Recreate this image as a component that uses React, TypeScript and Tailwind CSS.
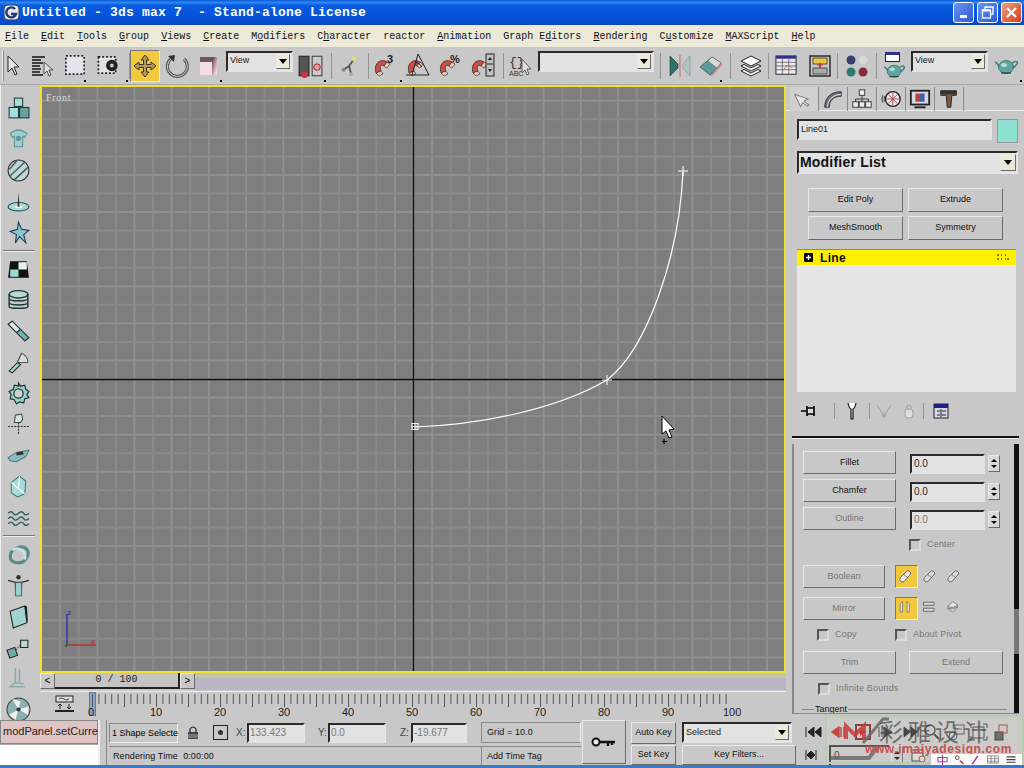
import React from "react";

const raised = "border border-t-[#e8e8e8] border-l-[#e8e8e8] border-r-[#6a6a6a] border-b-[#6a6a6a]";
const sunken = "border-2 border-t-[#2a2a2a] border-l-[#2a2a2a] border-r-[#e4e4e4] border-b-[#e4e4e4] bg-[#e2e2e2]";

function Svg({ children, w = 24, h = 24, vb = "0 0 24 24" }: { children: React.ReactNode; w?: number; h?: number; vb?: string }) {
  return <svg width={w} height={h} viewBox={vb} className="block shrink-0">{children}</svg>;
}

const Flyout = () => <div className="absolute right-[1px] bottom-[2px] w-[2px] h-[2px] bg-black" />;

function Slot({ cls, children, fly }: { cls: string; children?: React.ReactNode; fly?: boolean }) {
  return <div className={`relative h-full flex items-center justify-center shrink-0 ${cls}`}>{children}{fly && <Flyout />}</div>;
}

const Sep = ({ cls = "" }: { cls?: string }) => <div className={`w-[1px] h-[26px] bg-[#949494] shrink-0 ${cls}`} />;

function Combo({ cls, text }: { cls: string; text?: string }) {
  return (
    <div className={`relative h-[21px] flex items-center shrink-0 ${sunken} ${cls}`}>
      <span className="text-[9px] pl-[2px] text-[#222]">{text}</span>
      <div className={`absolute right-[1px] top-[1px] w-[14px] h-[15px] bg-[#ece9d8] ${raised} flex items-center justify-center`}>
        <svg width="8" height="5" viewBox="0 0 8 5"><path d="M0 0h8L4 5z" fill="#000" /></svg>
      </div>
    </div>
  );
}

const Magnet = ({ extra }: { extra?: React.ReactNode }) => (
  <Svg w={28} h={26} vb="0 0 28 26">
    <path d="M4 20 C1 10 9 5 15 9 L12 13 C9 11 7 14 9 18z" fill="#c8504a" stroke="#3a1a1a" strokeWidth=".7" />
    <path d="M4 20l5-2 2 3-4 2z M12 13l3-4 3 2-3 4z" fill="#e6cdb8" stroke="#3a1a1a" strokeWidth=".6" />
    {extra}
  </Svg>
);

const Teapot = ({ w = 22 }: { w?: number }) => (
  <Svg w={w} h={w * 0.75} vb="0 0 24 18">
    <path d="M1 5 C4 6 4 9 6 10 M18 6 C22 3 24 5 23 7 C22 9 19 11 17 12" fill="none" stroke="#3f7f7a" strokeWidth="1.6" />
    <ellipse cx="12" cy="10" rx="7.5" ry="6.5" fill="#5fa5a0" stroke="#23504d" strokeWidth=".6" />
    <ellipse cx="10" cy="8" rx="3" ry="2" fill="#b7dedb" />
    <path d="M7 16h10" stroke="#1d3d3a" strokeWidth="1.2" />
  </Svg>
);

function TopToolbar() {
  return (
    <div className="h-[38px] flex items-center bg-[#c8c8c8] border-b border-[#a8a8a8] shrink-0">
      <Slot cls="w-[5px]"><div className="w-[2px] h-[30px] bg-[#eeeeee] border-r border-[#8a8a8a]" /></Slot>
      <Slot cls="w-[16px]"><Svg w={14} h={24} vb="0 0 14 24"><path d="M2 2v16l4-4 3 7 2-1-3-7h5z" fill="#e6e6e6" stroke="#222" strokeWidth="1" /></Svg></Slot>
      <Slot cls="w-[42px]"><Svg w={24} h={24}><path d="M2 3h13M2 6h9M2 9h11M2 12h8M2 15h9M2 18h8M2 21h11" stroke="#111" strokeWidth="1.5" /><path d="M14 8v12l3-3 2 5 2-1-2-5h4z" fill="#ddd" stroke="#333" strokeWidth=".8" /></Svg></Slot>
      <Slot cls="w-[24px]" fly><Svg w={23} h={23}><rect x="2" y="2" width="19" height="19" fill="#e4e4ee" stroke="#222" strokeWidth="1.8" strokeDasharray="2 2" /></Svg></Slot>
      <Slot cls="w-[42px]" fly><Svg w={24} h={23}><rect x="2" y="3" width="18" height="17" fill="#e4e4e4" stroke="#222" strokeWidth="1.8" strokeDasharray="2 2" /><circle cx="16" cy="12" r="6" fill="#222" /><circle cx="16" cy="12" r="2" fill="#ccc" /></Svg></Slot>
      <Sep />
      <Slot cls="w-[30px]">
        <div className="w-[30px] h-[32px] bg-[#f2c83c] border border-t-[#777] border-l-[#777] border-r-[#eee] border-b-[#eee] flex items-center justify-center">
          <Svg w={24} h={24}><path d="M12 1l4 5h-2.500v4.500H18V8l5 4-5 4v-2.500h-4.500V18H16l-4 5-4-5h2.500v-4.500H6V16l-5-4 5-4v2.500h4.500V6H8z" fill="#b89a55" stroke="#333" strokeWidth="1" /></Svg>
        </div>
      </Slot>
      <Slot cls="w-[34px]"><Svg w={24} h={24}><path d="M7 4 A10 10 0 1 0 19 5" fill="none" stroke="#5a5a5a" strokeWidth="3.200" /><path d="M7 4 A10 10 0 1 0 19 5" fill="none" stroke="#c8c8c8" strokeWidth="1" /><path d="M3 2l7-1-1 7z" fill="#333" /></Svg></Slot>
      <Slot cls="w-[29px]" fly>
        <svg width="17" height="18" viewBox="0 0 17 18" className="block">
          <defs><linearGradient id="sc" x1="0" y1="0" x2="1" y2="1"><stop offset="0" stopColor="#4a3a3a" /><stop offset=".55" stopColor="#c8a0a8" /><stop offset="1" stopColor="#fff0f4" /></linearGradient></defs>
          <rect width="17" height="18" fill="#6a5a5a" /><rect x="0" y="5" width="12" height="13" fill="#f4dce4" /><rect x="12" y="0" width="5" height="18" fill="url(#sc)" />
        </svg>
      </Slot>
      <Combo cls="ml-[3px] w-[67px] mb-[9px]" text="View" />
      <Slot cls="w-[34px]" fly><Svg w={26} h={26}><rect x="2" y="3" width="9" height="18" fill="#555" stroke="#222" /><circle cx="7" cy="20" r="3" fill="#d03040" /><rect x="14" y="3" width="9" height="18" fill="#d0c8c8" stroke="#444" /><circle cx="18.500" cy="13" r="3" fill="#e0a0a0" stroke="#800" strokeWidth=".7" /></Svg></Slot>
      <Sep cls="ml-[4px]" />
      <Slot cls="w-[36px]"><Svg w={22} h={24}><path d="M11 12L16 5M11 12L5 16M11 12l2 8" stroke="#555" strokeWidth="2" /><circle cx="16" cy="4" r="2.500" fill="#e8e070" /><circle cx="5" cy="16" r="2.200" fill="#888" /><circle cx="13" cy="21" r="2.200" fill="#aaa" /></Svg></Slot>
      <Sep />
      <Slot cls="w-[34px]" fly><Magnet extra={<text x="15" y="10" fontSize="11" fontWeight="700" fontFamily="Liberation Sans" fill="#222">3</text>} /></Slot>
      <Slot cls="w-[32px]"><Magnet extra={<path d="M1 22h23M13 1L24 22M13 1L7 22M10 9q5 1 7 5" fill="none" stroke="#222" strokeWidth="1" />} /></Slot>
      <Slot cls="w-[32px]"><Magnet extra={<text x="13" y="10" fontSize="11" fontWeight="700" fontFamily="Liberation Sans" fill="#222">%</text>} /></Slot>
      <Slot cls="w-[32px]"><Magnet extra={<g><rect x="17" y="1" width="8" height="22" fill="#c0c0c0" stroke="#222" /><path d="M19 7l2-3 2 3zM19 16l2 3 2-3z" fill="#222" /><path d="M18 11h6" stroke="#222" /></g>} /></Slot>
      <Sep cls="ml-[4px]" />
      <Slot cls="w-[34px]"><Svg w={28} h={26} vb="0 0 28 26"><text x="2" y="13" fontSize="13" fontFamily="Liberation Mono" fill="#333">{"{}"}</text><text x="2" y="23" fontSize="7" fontFamily="Liberation Sans" fill="#333">ABC</text><path d="M15 6v14l3-3 2 5 2-1-2-5h4z" fill="#ddd" stroke="#444" strokeWidth=".8" /></Svg></Slot>
      <Combo cls="w-[116px] mb-[9px]" />
      <Sep cls="ml-[6px]" />
      <Slot cls="w-[38px]"><Svg w={24} h={24}><path d="M2 2l8 8v4l-8 8z" fill="#2f6f6c" stroke="#1a3a3a" strokeWidth=".6" /><path d="M12 1v22" stroke="#d08080" strokeWidth="1.4" /><path d="M22 2l-7 8v4l7 8z" fill="#b0c4c4" stroke="#6a8a8a" strokeWidth=".6" /></Svg></Slot>
      <Slot cls="w-[24px]" fly><Svg w={24} h={24}><path d="M1 13L13 3l9 6-11 12z" fill="#5f9a9a" stroke="#2a4a4a" strokeWidth=".7" /><path d="M13 3l9 6-4 5-9-7z" fill="#d8d8d8" stroke="#666" strokeWidth=".6" /><path d="M12 22l11-12" stroke="#d08080" strokeWidth="1.5" /></Svg></Slot>
      <Sep cls="ml-[7px]" />
      <Slot cls="w-[37px]"><Svg w={26} h={24}><path d="M3 7l10-5 10 5-10 5z M3 12l10 5 10-5-3-1.500-7 3.500-7-3.500z M3 17l10 5 10-5-3-1.500-7 3.500-7-3.500z" fill="#fff" stroke="#222" strokeWidth="1" /></Svg></Slot>
      <Sep />
      <Slot cls="w-[34px]"><Svg w={24} h={22}><rect x="1" y="1" width="22" height="20" fill="#e8e8f4" stroke="#222" /><rect x="1" y="1" width="22" height="3" fill="#303090" /><path d="M1 8h22M1 12h22M1 16h22M8 4v17M15 4v17" stroke="#444" strokeWidth=".7" /><path d="M9 17l4-6 6 3" fill="none" stroke="#c08030" /></Svg></Slot>
      <Slot cls="w-[34px]"><Svg w={24} h={24}><rect x="2" y="2" width="20" height="20" fill="#c8c8c8" stroke="#222" strokeWidth="1.4" /><rect x="5" y="4" width="14" height="6" fill="#e8c840" stroke="#222" strokeWidth=".7" /><rect x="5" y="14" width="14" height="6" fill="#aaa" stroke="#222" strokeWidth=".7" /><path d="M12 9v5" stroke="#c03020" strokeWidth="1.6" /><path d="M9 11h6" stroke="#c03020" strokeWidth="1" /></Svg></Slot>
      <Sep />
      <Slot cls="w-[38px]"><Svg w={24} h={24}><circle cx="6" cy="6" r="4.500" fill="#3c3c70" /><circle cx="18" cy="6" r="4.500" fill="#d8d8d8" /><circle cx="6" cy="18" r="4.500" fill="#2f7a70" /><circle cx="18" cy="18" r="4.500" fill="#8a2a3a" /></Svg></Slot>
      <Sep />
      <Slot cls="w-[34px]"><div className="flex flex-col items-center"><div className="w-[15px] h-[10px] bg-white border border-[#222] border-t-[3px] border-t-[#303090] ml-[-4px]" /><Teapot w={22} /></div></Slot>
      <Combo cls="w-[77px] mb-[9px]" text="View" />
      <Slot cls="w-[35px]" fly><Teapot w={24} /></Slot>
    </div>
  );
}

const side = "fill-[#a8dcd8] stroke-[#1c3a3a]";
const leftIcons: React.ReactNode[][] = [
  [
    <g key="a"><rect x="8" y="2" width="8" height="8" className={side} /><rect x="3" y="11" width="9" height="10" className={side} /><rect x="13" y="11" width="9" height="10" className="fill-[#6aa0a0] stroke-[#1c3a3a]" /></g>,
    <g key="b"><path d="M4 6l6-3 4 0 6 3-2 4-2-1v10H8V9l-2 1z" className="fill-[#9cd0cc] stroke-[#5a9090]" /><circle cx="12" cy="11" r="2.500" fill="#5a9a9a" /></g>,
    <g key="c"><circle cx="12" cy="12" r="10" fill="#b8d8d8" stroke="#333" /><path d="M4 17L18 4M8 21L21 9M3 11L11 2" stroke="#555" strokeWidth="1.4" /></g>,
    <g key="d"><ellipse cx="12" cy="17" rx="10" ry="4" fill="#a8d8d8" stroke="#2a5a5a" /><ellipse cx="12" cy="17" rx="4" ry="1.500" fill="#fff" /><path d="M12 3l1 14h-2z" fill="#333" /></g>,
    <g key="e"><path d="M12 2l3 7 7 1-5 4 2 8-6-6-4 6 1-8-6-3 7-2z" fill="#8ac4d0" stroke="#1c3a50" /></g>,
  ],
  [
    <g key="a"><path d="M4 4h16l2 16H2z" fill="#111" /><rect x="12" y="5" width="8" height="7" fill="#e4f2f0" /><rect x="4" y="12" width="8" height="7" fill="#9cd8d4" /></g>,
    <g key="b"><ellipse cx="12" cy="6" rx="9" ry="3.500" fill="#b8d8d4" stroke="#1c3a3a" strokeWidth="1.4" /><path d="M3 6v12c0 2 18 2 18 0V6M3 10c0 3 18 3 18 0M3 14c0 3 18 3 18 0" fill="none" stroke="#1c3a3a" strokeWidth="1.4" /></g>,
    <g key="c"><path d="M2 5l4-3 8 8-4 3z" fill="#d8e8e8" stroke="#222" /><path d="M10 13l4-3 8 8-4 3z" fill="#6fb0b0" stroke="#222" /></g>,
    <g key="d"><path d="M11 12L3 20l3 2 8-8zM11 12l4-9M11 12h10" stroke="#222" fill="#9cd0cc" /><path d="M15 3q6 3 6 9h-10z" fill="#ddd" stroke="#555" /></g>,
    <g key="e"><path d="M12 2l2 3 4-1 1 4 3 2-2 3 2 3-4 1-1 4-4-1-3 2-2-4-4-1 1-4-2-3 4-2 1-4 4 1z" fill="#9cd0cc" stroke="#1c3a3a" strokeWidth="1.200" /><circle cx="12" cy="12" r="4.500" fill="#d0d0d0" stroke="#1c3a3a" strokeWidth="1.200" /></g>,
    <g key="f"><path d="M2 14h20M12 10v12" stroke="#333" strokeDasharray="2 1" /><path d="M9 3l6-1 1 5-2 3H8z" fill="#cfe8e4" stroke="#444" /></g>,
    <g key="g"><path d="M2 14l8-5 12-2-3 6-9 5-6-1z" fill="#8abcc0" stroke="#4a7a80" /><path d="M10 9l6-1 1 3-7 1z" fill="#333" /></g>,
    <g key="h"><path d="M5 8l8-6 6 5-1 12-7 3-6-4z" fill="#a8dcd8" stroke="#44777a" /><path d="M13 2l-1 12 6 5M12 14l-7-6" stroke="#fff" fill="none" /></g>,
    <g key="i"><path d="M2 8q3-3 5 0t5 0 5 0 5 0M2 13q3-3 5 0t5 0 5 0 5 0M2 18q3-3 5 0t5 0 5 0 5 0" fill="none" stroke="#2a5a5a" strokeWidth="1.300" /></g>,
  ],
  [
    <g key="a"><path d="M4 14c0-8 12-12 16-7s-2 13-8 13-8-3-8-6z" fill="none" stroke="#5a8a8a" strokeWidth="3" /><path d="M6 8c6-5 14 2 12 9" fill="none" stroke="#c8e0e0" strokeWidth="2.400" /></g>,
    <g key="b"><circle cx="12" cy="4" r="2.200" fill="#333" /><path d="M2 7l7 2h6l7-2M9 9l1 13M15 9l-1 13" fill="none" stroke="#333" strokeWidth="1.300" /><path d="M9 9h6v13H9z" fill="#9cd0cc" stroke="#333" strokeWidth=".6" /></g>,
    <g key="c"><path d="M4 7l14-5 2 16-13 5z" fill="#a0d4d0" stroke="#222" /><path d="M18 2l2 16 1-2-1-14z" fill="#222" /></g>,
    <g key="d"><rect x="2" y="13" width="8" height="8" fill="#6fa8a8" stroke="#222" transform="rotate(-20 6 17)" /><rect x="14" y="5" width="7" height="7" fill="#b8d8d4" stroke="#222" /><path d="M10 14l4-5" stroke="#333" strokeDasharray="1 1" /></g>,
    <g key="e"><path d="M9 2v14l-5 4h14M9 16l8 1M13 3v12" stroke="#8aa8a8" strokeWidth="1.400" fill="none" /></g>,
    <g key="f"><circle cx="12" cy="12" r="11" fill="#8ab0b0" stroke="#444" /><path d="M12 12L6 2l8 2zM12 12l10-3-1 8zM12 12l-3 10-6-5z" fill="#f0f0f0" /><circle cx="12" cy="12" r="2" fill="#333" /></g>,
  ],
];

function LeftToolbar() {
  return (
    <div className="w-[40px] shrink-0 flex flex-col items-center pt-[8px] pr-[4px] border-l border-[#eeeeee] bg-[#c8c8c8] overflow-hidden">
      {leftIcons.map((grp, i) => (
        <React.Fragment key={i}>
          {i > 0 && <div className="w-[32px] h-[2px] bg-[#777] border-b border-[#eee] my-[2px] shrink-0" />}
          {grp.map((ic, j) => (
            <div key={j} className="h-[31px] w-[32px] flex items-center justify-center shrink-0"><Svg w={25} h={25}>{ic}</Svg></div>
          ))}
        </React.Fragment>
      ))}
    </div>
  );
}

function gridLines() {
  const xs: number[] = [], ys: number[] = [];
  for (let x = 371.500 - 18.6 * 20; x < 750; x += 18.6) if (x > 0) xs.push(x);
  for (let y = 292 - 18.55 * 16; y < 590; y += 18.55) if (y > 0) ys.push(y);
  return { xs, ys };
}

function Viewport() {
  const { xs, ys } = gridLines();
  return (
    <div className="relative h-[588px] bg-[#7e7e7e] border-2 border-[#f0e030] overflow-hidden shrink-0">
      <svg width="742" height="584" viewBox="0 0 742 584" className="absolute left-0 top-0">
        {xs.map((x, i) => <line key={x} x1={x} x2={x} y1="0" y2="584" stroke={i % 2 ? "#8a8a8a" : "#909090"} strokeWidth="2" />)}
        {ys.map((y, i) => <line key={y} x1="0" x2="742" y1={y} y2={y} stroke={i % 2 ? "#8a8a8a" : "#909090"} strokeWidth="2" />)}
        <line x1="371.500" x2="371.500" y1="0" y2="584" stroke="#0c0c0c" strokeWidth="1.300" />
        <line x1="0" x2="742" y1="292.500" y2="292.500" stroke="#0c0c0c" strokeWidth="1.300" />
        <path d="M373 340 C 430 338, 510 325, 565 293 C 605 262, 637 170, 641 85" fill="none" stroke="#fff" strokeWidth="1.200" />
        <rect x="370" y="336.500" width="6" height="6" fill="none" stroke="#fff" />
        <path d="M373 336.500v6M370 339.500h6" stroke="#fff" strokeWidth=".8" />
        <path d="M565 288v10M560 293h10" stroke="#fff" strokeWidth="1" />
        <path d="M641 79v10M636 84h10" stroke="#fff" strokeWidth="1" />
        <path d="M25 558V527" stroke="#2020c0" strokeWidth="1.200" />
        <path d="M25 558H54" stroke="#c02020" strokeWidth="1.200" />
        <path d="M25 558l-2 0 2 2" stroke="#208020" strokeWidth="1.200" />
        <text x="25" y="528" fontSize="7" fill="#2020c0" fontFamily="Liberation Mono">z</text>
        <text x="49" y="557" fontSize="7" fill="#c02020" fontFamily="Liberation Mono">x</text>
        <path d="M620 329v18l4-3 3 7 3-1-3-7 5-1z" fill="#fff" stroke="#000" />
        <path d="M622 352v5M620 354.500h5" stroke="#000" strokeWidth="1.200" />
      </svg>
      <div className="absolute left-[4px] top-[6px] text-[10px] leading-none text-[#d8d8d8] font-['Liberation_Serif',serif] tracking-[0.7px]">Front</div>
    </div>
  );
}

function Timeline() {
  const ticks = Array.from({ length: 101 }, (_, i) => i);
  return (
    <div className="flex flex-col shrink-0">
      <div className="h-[18px] flex bg-[#c8c8c8]">
        <div className={`w-[15px] h-[16px] ${raised} bg-[#c8c8c8] text-[10px] leading-[13px] text-center`}>&lt;</div>
        <div className="w-[125px] h-[16px] bg-[#c4c4c4] border-b-2 border-r-2 border-[#222] text-center text-[10px] leading-[14px] font-['Liberation_Mono',monospace] text-[#222]">0 / 100</div>
        <div className={`w-[15px] h-[16px] ${raised} bg-[#c8c8c8] text-[10px] leading-[13px] text-center`}>&gt;</div>
        <div className="flex-1 flex flex-col">
          <div className="h-[5px] bg-[#c4c4a8]" />
          <div className="h-[12px] bg-[#bcb4c4]" />
        </div>
      </div>
      <div className="h-[29px] bg-[#c8c8c8] border-t border-[#eeeeee] relative flex">
        <div className="w-[50px] shrink-0 flex justify-center pt-[3px]">
          <Svg w={22} h={18} vb="0 0 22 18"><rect x="2" y="1" width="17" height="6" fill="#ddd" stroke="#222" /><path d="M5 4q3-2 5 0t5 0" fill="none" stroke="#222" strokeWidth=".8" /><path d="M6 9v5M4 11l2-2 2 2M15 9v5M13 12l2 2 2-2" fill="none" stroke="#222" /><rect x="1" y="15" width="19" height="2" fill="#222" /></Svg>
        </div>
        <div className="absolute left-[49px] top-0 w-[7px] h-[24px] bg-[#8aa8c8] border border-[#5a7a9a]" />
        <svg width="640" height="29" viewBox="0 0 640 29" className="absolute left-[52px] top-0">
          {ticks.map(t => <line key={t} x1={t * 6.4 + 0.5} x2={t * 6.4 + 0.5} y1="2" y2={t % 5 === 0 ? 15 : 12} stroke="#555" strokeWidth="1" />)}
        </svg>
        {[
          ["0", "left-[48px]"], ["10", "left-[110px]"], ["20", "left-[174px]"], ["30", "left-[238px]"], ["40", "left-[302px]"],
          ["50", "left-[366px]"], ["60", "left-[430px]"], ["70", "left-[494px]"], ["80", "left-[558px]"], ["90", "left-[622px]"], ["100", "left-[683px]"],
        ].map(([n, c]) => <div key={n} className={`absolute top-[14px] text-[11px] leading-[12px] text-[#222] ${c}`}>{n}</div>)}
      </div>
    </div>
  );
}

function Btn({ t, cls, dim }: { t: string; cls: string; dim?: boolean }) {
  return <div className={`flex items-center justify-center text-[9px] shrink-0 bg-[#c8c8c8] ${raised} ${dim ? "text-[#767676]" : "text-[#111]"} ${cls}`}>{t}</div>;
}

function Spin({ v, dim }: { v: string; dim?: boolean }) {
  return (
    <div className="flex items-center gap-[3px] ml-[14px] mt-[2px]">
      <div className={`w-[75px] h-[20px] ${sunken} text-[10px] leading-[15px] pl-[2px] ${dim ? "text-[#777]" : "text-[#222]"}`}>{v}</div>
      <div className={`w-[12px] h-[17px] bg-[#d8d8d8] ${raised} flex flex-col items-center justify-center gap-[3px]`}>
        <svg width="6" height="3" viewBox="0 0 6 3"><path d="M3 0l3 3H0z" fill="#000" /></svg>
        <svg width="6" height="3" viewBox="0 0 6 3"><path d="M3 3L0 0h6z" fill="#000" /></svg>
      </div>
    </div>
  );
}

function Check({ t, cls = "" }: { t: string; cls?: string }) {
  return (
    <div className={`flex items-center gap-[6px] ${cls}`}>
      <div className="w-[12px] h-[12px] border-2 border-t-[#555] border-l-[#555] border-r-[#ddd] border-b-[#ddd] bg-[#c8c8c8]" />
      <span className="text-[9px] text-[#777] tracking-[0.2px]">{t}</span>
    </div>
  );
}

const Chain = ({ on }: { on?: boolean }) => (
  <div className={`w-[23px] h-[23px] flex items-center justify-center shrink-0 ${on ? "bg-[#f2c83c] border border-t-[#777] border-l-[#777] border-r-[#eee] border-b-[#eee]" : ""}`}>
    <Svg w={18} h={18}><path d="M3 13l8-8a3 3 0 0 1 5 4l-7 8a3 3 0 0 1-6-4z" fill={on ? "#e8e8f0" : "#d8d8d8"} stroke="#666" strokeWidth="1.300" /><path d="M8 9l5 4" stroke="#777" strokeWidth="1.200" /></Svg>
  </div>
);

function RightPanel() {
  const tabs: React.ReactNode[] = [
    <path key="a" d="M5 3v15l4-3 3 6 2-1-3-6h5z" fill="#e8e8e8" stroke="#777" transform="rotate(-25 12 12)" />,
    <g key="b"><path d="M3 21C3 10 10 4 21 4v5C13 9 8 13 8 21z" fill="#6a6a7a" stroke="#333" /><path d="M6 21c0-8 6-14 15-14" fill="none" stroke="#ccd" strokeWidth="1.200" /></g>,
    <g key="c"><rect x="9" y="2" width="6" height="6" fill="#eee" stroke="#333" /><rect x="2" y="15" width="6" height="6" fill="#eee" stroke="#333" /><rect x="9" y="15" width="6" height="6" fill="#eee" stroke="#333" /><rect x="16" y="15" width="6" height="6" fill="#eee" stroke="#333" /><path d="M12 8v7M5 15v-3h14v3" fill="none" stroke="#333" /></g>,
    <g key="d"><circle cx="14" cy="12" r="8" fill="#eee" stroke="#222" strokeWidth="1.500" /><path d="M14 5v14M7 12h14M9 7l10 10M19 7L9 17" stroke="#b04040" /><path d="M3 8q-2 4 0 8M5 9q-1 3 0 6" fill="none" stroke="#333" /></g>,
    <g key="e"><rect x="2" y="3" width="20" height="15" fill="#d8d8e4" stroke="#222" strokeWidth="2" /><rect x="7" y="6" width="5" height="9" fill="#c04040" /><rect x="12" y="6" width="5" height="9" fill="#4060b0" /><path d="M6 21h12" stroke="#222" strokeWidth="2" /></g>,
    <g key="f"><path d="M3 3h17v5h-5l-1 13h-4L9 8H3z" fill="#7a5a3a" stroke="#222" /><path d="M3 3h17v4H3z" fill="#333" /></g>,
  ];
  return (
    <div className="w-[238px] shrink-0 bg-[#c8c8c8] flex flex-col relative overflow-hidden">
      <div className="h-[26px] flex pl-[4px] pt-[2px] border-b border-[#eeeeee] shrink-0">
        {tabs.map((t, i) => (
          <div key={i} className={`w-[29px] h-[24px] flex items-center justify-center border-r border-[#8a8a8a] ${i === 0 ? "bg-[#d0d0d0]" : ""}`}><Svg w={22} h={22}>{t}</Svg></div>
        ))}
      </div>
      <div className="flex items-start pl-[11px] pt-[8px] shrink-0">
        <div className={`w-[195px] h-[21px] ${sunken} text-[9px] leading-[16px] pl-[2px] text-[#222]`}>Line01</div>
        <div className="ml-[5px] w-[21px] h-[24px] bg-[#8ee0d0] border border-[#999]" />
      </div>
      <div className="pl-[11px] mt-[8px] shrink-0">
        <div className={`relative w-[221px] h-[23px] ${sunken} text-[14px] font-bold leading-[19px] pl-[1px] text-[#111] tracking-[0.2px]`}>
          Modifier List
          <div className={`absolute right-[0px] top-[1px] w-[16px] h-[17px] bg-[#ece9d8] ${raised} flex items-center justify-center`}>
            <svg width="8" height="5" viewBox="0 0 8 5"><path d="M0 0h8L4 5z" fill="#000" /></svg>
          </div>
        </div>
      </div>
      <div className="grid grid-cols-[95px_95px] gap-x-[5px] gap-y-[4px] pl-[22px] pt-[14px] shrink-0">
        {["Edit Poly", "Extrude", "MeshSmooth", "Symmetry"].map(t => <Btn key={t} t={t} cls="h-[24px]" />)}
      </div>
      <div className="ml-[11px] mt-[9px] w-[219px] h-[143px] bg-[#e6e6e6] border-t border-[#888] shrink-0">
        <div className="h-[15px] bg-[#fff000] flex items-center pl-[7px] relative">
          <div className="w-[9px] h-[9px] bg-black rounded-[1px] flex items-center justify-center">
            <svg width="7" height="7" viewBox="0 0 7 7"><path d="M3.500 1v5M1 3.500h5" stroke="#fff" strokeWidth="1.400" /></svg>
          </div>
          <span className="ml-[7px] text-[12px] font-bold text-[#111] leading-none tracking-[0.3px]">Line</span>
          <svg width="14" height="8" viewBox="0 0 14 8" className="absolute right-[6px] top-[3px]"><path d="M1 6h2M5 2h1M9 2h1M11 6h2M5 6h1M9 6h1M1 2h2" stroke="#111" strokeWidth="1" /></svg>
        </div>
      </div>
      <div className="flex items-center pl-[14px] mt-[8px] h-[22px] shrink-0">
        <div className="w-[34px] flex justify-start"><Svg w={20} h={16} vb="0 0 20 16"><path d="M1 8h6" stroke="#000" strokeWidth="1.500" /><path d="M7 3v10M7 5h7v6H7M14 3v10" stroke="#000" strokeWidth="1.600" fill="#ddd" /></Svg></div>
        <div className="w-[1px] h-[16px] bg-[#949494]" />
        <div className="w-[34px] flex justify-center"><Svg w={12} h={18} vb="0 0 12 18"><path d="M2 1q1 5 3 6v10h2V7q2-1 3-6" fill="#fff" stroke="#111" strokeWidth="1.200" /></Svg></div>
        <div className="w-[1px] h-[16px] bg-[#949494]" />
        <div className="w-[28px] flex justify-center"><Svg w={18} h={16} vb="0 0 18 16"><path d="M2 2l7 11 7-11M9 13v2" fill="none" stroke="#a0a0a0" /><circle cx="9" cy="12" r="2" fill="none" stroke="#a0a0a0" /></Svg></div>
        <div className="w-[22px] flex justify-center"><Svg w={12} h={16} vb="0 0 12 16"><rect x="2" y="6" width="8" height="9" rx="3" fill="#ddd" stroke="#a0a0a0" /><path d="M4 6V3q2-2 4 0v3" fill="none" stroke="#a0a0a0" /></Svg></div>
        <div className="w-[1px] h-[16px] bg-[#949494] ml-[3px]" />
        <div className="ml-[9px]"><Svg w={16} h={16} vb="0 0 16 16"><rect x="1" y="1" width="14" height="14" fill="#d8d8e8" stroke="#223" /><rect x="1" y="1" width="14" height="4" fill="#202080" /><path d="M4 8h3M9 8h4M4 12h3M9 12h4M8 6v8" stroke="#222" /></Svg></div>
      </div>
      <div className="mx-[6px] mt-[14px] w-[227px] h-[2px] bg-[#111] border-b border-[#eeeeee] box-content shrink-0" />
      <div className="h-[270px] ml-[6px] mr-[5px] mt-[5px] relative border-l-2 border-[#888] pl-[9px] pt-[7px] shrink-0 border-b border-b-[#888] overflow-hidden">
        <div className="absolute right-0 top-0 bottom-0 w-[5px] bg-[#111]"><div className="absolute top-[165px] h-[45px] w-[5px] bg-[#777]" /></div>
        <div className="flex">
          <Btn t="Fillet" cls="w-[93px] h-[23px]" />
          <Spin v="0.0" />
        </div>
        <div className="flex mt-[5px]">
          <Btn t="Chamfer" cls="w-[93px] h-[23px]" />
          <Spin v="0.0" />
        </div>
        <div className="flex mt-[5px]">
          <Btn t="Outline" dim cls="w-[93px] h-[23px]" />
          <Spin v="0.0" dim />
        </div>
        <Check t="Center" cls="ml-[106px] mt-[8px] h-[14px]" />
        <div className="flex items-center mt-[13px]">
          <Btn t="Boolean" dim cls="w-[82px] h-[23px]" />
          <div className="flex ml-[10px] gap-[1px]"><Chain on /><Chain /><Chain /></div>
        </div>
        <div className="flex items-center mt-[9px]">
          <Btn t="Mirror" dim cls="w-[82px] h-[23px]" />
          <div className="flex ml-[10px] gap-[1px]">
            <div className="w-[23px] h-[23px] bg-[#f2c83c] border border-t-[#777] border-l-[#777] border-r-[#eee] border-b-[#eee] flex items-center justify-center"><Svg w={18} h={18}><path d="M3 16V5l3-3v14zM15 16V5l-3-3v14z" fill="#eef" stroke="#665" /></Svg></div>
            <div className="w-[23px] h-[23px] flex items-center justify-center"><Svg w={18} h={18}><path d="M2 3h14v4H2zM2 11h14v4H2z" fill="#ddd" stroke="#444" /></Svg></div>
            <div className="w-[23px] h-[23px] flex items-center justify-center"><Svg w={18} h={18}><path d="M2 9l7-7 7 5-7 3zM2 11l7 5 7-7-7 3z" fill="#e4e4e4" stroke="#666" /></Svg></div>
          </div>
        </div>
        <div className="flex items-center mt-[8px] h-[14px]">
          <Check t="Copy" cls="ml-[14px] w-[78px]" />
          <Check t="About Pivot" />
        </div>
        <div className="flex mt-[9px]">
          <Btn t="Trim" dim cls="w-[93px] h-[23px]" />
          <Btn t="Extend" dim cls="w-[94px] h-[23px] ml-[13px]" />
        </div>
        <Check t="Infinite Bounds" cls="ml-[15px] mt-[8px] h-[14px]" />
        <div className="absolute left-[8px] right-[12px] top-[265px] border-t border-[#888] text-[9px] leading-[8px] text-[#111] pl-[12px]"><span className="bg-[#c8c8c8] relative top-[-5px] px-[1px]">Tangent</span></div>
      </div>
    </div>
  );
}

function StatusBar() {
  return (
    <div className="h-[45px] flex bg-[#c8c8c8] shrink-0 relative">
      <div className="w-[100px] shrink-0 flex flex-col border-r-2 border-[#eeeeee]">
        <div className="h-[24px] bg-[#e0c4c4] border border-[#888] text-[11px] leading-[21px] text-[#222] whitespace-nowrap pl-[2px]">modPanel.setCurre</div>
        <div className="flex-1 bg-white border-t border-[#aaa]" />
      </div>
      <div className="w-[7px] border-r border-[#888]" />
      <div className="w-[374px] flex flex-col pl-[2px] pt-[2px]">
        <div className="flex items-center h-[21px]">
          <div className="w-[69px] h-[20px] border border-t-[#888] border-l-[#888] border-r-[#eee] border-b-[#eee] text-[9px] leading-[18px] pl-[2px] whitespace-nowrap">1 Shape Selecte</div>
          <div className="ml-[9px] w-[12px]"><Svg w={12} h={16} vb="0 0 12 16"><path d="M3 7V4q3-4 6 0v3" fill="none" stroke="#222" strokeWidth="1.200" /><rect x="1" y="7" width="10" height="7" fill="#444" /><path d="M1 10h10M1 12h10" stroke="#ccc" strokeWidth=".7" /></Svg></div>
          <div className="ml-[14px] w-[15px] h-[15px] border border-[#222] flex items-center justify-center"><div className="w-[5px] h-[5px] rounded-full bg-[#333]" /></div>
          <span className="ml-[8px] w-[11px] text-[10px] text-[#444]">X:</span>
          <div className={`w-[58px] h-[20px] ${sunken} text-[10px] leading-[16px] pl-[1px] text-[#777]`}>133.423</div>
          <span className="ml-[13px] w-[10px] text-[10px] text-[#444]">Y:</span>
          <div className={`w-[58px] h-[20px] ${sunken} text-[10px] leading-[16px] pl-[1px] text-[#777]`}>0.0</div>
          <span className="ml-[14px] w-[11px] text-[10px] text-[#444]">Z:</span>
          <div className={`w-[56px] h-[20px] ${sunken} text-[10px] leading-[16px] pl-[1px] text-[#777]`}>-19.677</div>
        </div>
        <div className="mt-[3px] h-[18px] border-t border-[#888] text-[9px] leading-[18px] pl-[4px] text-[#111] tracking-[0.1px]">Rendering Time&nbsp;&nbsp;0:00:00</div>
      </div>
      <div className="w-[100px] flex flex-col pt-[2px]">
        <div className="h-[22px] border border-t-[#888] border-l-[#888] border-r-[#eee] border-b-[#888] text-[9px] leading-[19px] pl-[5px] text-[#111] tracking-[0.1px]">Grid = 10.0</div>
        <div className="h-[19px] mt-[3px] border-t border-l border-[#888] text-[9px] leading-[18px] pl-[5px] text-[#111]">Add Time Tag</div>
      </div>
      <div className={`w-[44px] h-[44px] ml-[1px] flex items-center justify-center ${raised}`}>
        <Svg w={26} h={12} vb="0 0 26 12"><circle cx="5" cy="6" r="3.500" fill="#eee" stroke="#111" strokeWidth="2" /><path d="M8 6h16M17 6v4M21 6v3" stroke="#111" strokeWidth="2.400" fill="none" /></Svg>
      </div>
      <div className="w-[45px] ml-[5px] flex flex-col">
        <Btn t="Auto Key" cls="w-[45px] h-[22px] mt-[2px]" />
        <Btn t="Set Key" cls="w-[45px] h-[20px] mt-[1px]" />
      </div>
      <div className="ml-[6px] w-[114px] flex flex-col pt-[2px]">
        <Combo cls="w-[110px]" text="Selected" />
        <Btn t="Key Filters..." cls="w-[114px] h-[20px] mt-[2px]" />
      </div>
      <div className="ml-[7px] flex flex-col pt-[3px] gap-[4px] relative">
        <div className="flex items-center h-[18px] pl-[2px]">
          <div className="w-[26px]"><Svg w={17} h={10} vb="0 0 17 10"><path d="M1 0v10M9 0L3 5l6 5zM16 0l-6 5 6 5z" fill="#222" stroke="#222" /></Svg></div>
          <div className="w-[24px]"><Svg w={16} h={12} vb="0 0 16 12"><path d="M8 1L1 6l7 5zM10 1v10M13 1v10" fill="#c02020" stroke="#c02020" strokeWidth="1.400" /></Svg></div>
          <div className="w-[22px]"><div className="w-[16px] h-[16px] border-2 border-[#801818] flex items-center justify-center"><svg width="8" height="8" viewBox="0 0 8 8"><path d="M1 0l6 4-6 4z" fill="#c02020" /></svg></div></div>
          <div className="w-[26px]"><Svg w={16} h={12} vb="0 0 16 12"><path d="M2 1v10M5 1v10M7 1l8 5-8 5z" fill="#333" stroke="#333" /></Svg></div>
          <div className="w-[20px]"><Svg w={16} h={10} vb="0 0 16 10"><path d="M1 0l6 5-6 5zM8 0l6 5-6 5zM15 0v10" fill="#222" stroke="#222" /></Svg></div>
          <div className="w-[25px]"><Svg w={18} h={18} vb="0 0 18 18"><circle cx="7" cy="7" r="5" fill="none" stroke="#333" strokeWidth="1.300" /><path d="M11 11l5 5" stroke="#333" strokeWidth="2" /></Svg></div>
          <div className="w-[22px]"><Svg w={18} h={18} vb="0 0 18 18"><circle cx="5" cy="13" r="4" fill="none" stroke="#444" /><rect x="7" y="2" width="9" height="9" fill="none" stroke="#444" /><path d="M9 6h5" stroke="#a03030" /></Svg></div>
          <div className="w-[23px]"><Svg w={18} h={18} vb="0 0 18 18"><rect x="3" y="4" width="11" height="11" fill="#ccc" stroke="#333" /><path d="M1 1h4M1 1v4M17 1h-4M17 1v4M1 17h4M1 17v-4M17 17h-4M17 17v-4" stroke="#333" /></Svg></div>
          <div className="w-[18px]"><Svg w={16} h={18} vb="0 0 16 18"><rect x="2" y="9" width="8" height="8" fill="#555" stroke="#222" /><rect x="6" y="2" width="8" height="8" fill="none" stroke="#a03030" /></Svg></div>
        </div>
        <div className="flex items-center h-[20px] pl-[2px]">
          <Svg w={12} h={10} vb="0 0 12 10"><path d="M1 0v10M6 1L2 5l4 4zM6 1l4 4-4 4zM11 0v10" fill="#222" stroke="#222" /></Svg>
          <div className="ml-[12px] w-[60px] h-[20px] border-t-2 border-l-2 border-[#333] text-[10px] leading-[17px] pl-[3px] text-[#222]">0</div>
          <div className={`ml-[2px] w-[12px] h-[18px] ${raised} flex flex-col items-center justify-center gap-[3px]`}>
            <svg width="6" height="3" viewBox="0 0 6 3"><path d="M3 0l3 3H0z" fill="#000" /></svg>
            <svg width="6" height="3" viewBox="0 0 6 3"><path d="M3 3L0 0h6z" fill="#000" /></svg>
          </div>
          <div className="ml-[8px]"><Svg w={15} h={15} vb="0 0 15 15"><rect x="1" y="2" width="11" height="11" fill="#ddd" stroke="#333" /><path d="M1 5h11" stroke="#333" /><circle cx="11" cy="11" r="3" fill="#ddd" stroke="#a03030" /></Svg></div>
        </div>
      </div>
    </div>
  );
}

function Watermark() {
  return (
    <div className="absolute left-[825px] top-[715px] w-[199px] h-[49px] border-2 border-[#b8ccb0] bg-[#d8dcd0]/20 pointer-events-none">
      <svg width="62" height="46" viewBox="0 0 62 46" className="absolute left-[2px] top-[0px]">
        <path d="M17 22V9l9 9 9-9v14" fill="none" stroke="#c83c3c" strokeWidth="4" opacity=".85" />
        <path d="M34 26L54 2h6" fill="none" stroke="#666" strokeWidth="3" opacity=".85" />
        <path d="M2 41h38l9-12" fill="none" stroke="#666" strokeWidth="4" opacity=".8" />
      </svg>
      <div className="absolute left-[52px] top-[1px] text-[24px] leading-[25px] tracking-[4px] text-[#444]/70 font-['Noto_Sans_CJK_SC',sans-serif] whitespace-nowrap">彩雅设计</div>
      <div className="absolute left-[38px] top-[27px] text-[12px] leading-[10px] font-bold text-[#c85050] font-['Liberation_Sans',sans-serif] whitespace-nowrap tracking-[0.6px]">www.imaiyadesign.com</div>
      <div className="absolute right-0 bottom-[-3px] w-[91px] h-[11px] bg-white/90 flex items-center justify-around px-[2px]">
        <Svg w={13} h={10} vb="0 0 13 12"><path d="M6.500 0v12M1 3h11v5H1z" fill="none" stroke="#b040a0" strokeWidth="1.300" /></Svg>
        <Svg w={11} h={10} vb="0 0 11 11"><circle cx="3" cy="3" r="2" fill="none" stroke="#444" /><path d="M6 6l4 4" stroke="#b04040" strokeWidth="1.500" /></Svg>
        <Svg w={10} h={10} vb="0 0 10 11"><path d="M2 10l6-9" stroke="#b040a0" strokeWidth="1.800" /></Svg>
        <Svg w={14} h={9} vb="0 0 14 10"><path d="M1 1h12v8H1zM1 4h12M1 7h12M5 1v8M9 1v8" fill="none" stroke="#777" strokeWidth=".8" /></Svg>
        <Svg w={12} h={10} vb="0 0 12 11"><path d="M1 2h10M1 5h10M1 8h10" stroke="#444" strokeWidth="1.300" /></Svg>
      </div>
    </div>
  );
}

export default function App() {
  return (
    <div className="relative w-[1024px] h-[768px] overflow-hidden bg-[#c8c8c8] flex flex-col font-['Liberation_Sans',Arial,sans-serif]">
      <div className="h-[25px] shrink-0 flex items-center pl-[3px] pr-[2px] bg-[linear-gradient(180deg,#0a5ad8_0%,#2b86f2_10%,#0b5be0_22%,#0352d8_70%,#0a48c0_100%)]">
        <Svg w={17} h={17} vb="0 0 17 17"><rect x="1" y="1" width="15" height="15" rx="4" fill="#e8e8e8" stroke="#304060" /><path d="M12 5A5 5 0 1 0 13 10H8" fill="none" stroke="#203a7a" strokeWidth="2.400" /></Svg>
        <span className="ml-[2px] whitespace-pre text-[13px] font-bold text-white font-['Liberation_Mono',monospace] tracking-[0.2px]">Untitled - 3ds max 7  - Stand-alone License</span>
        <div className="ml-auto flex gap-[3px]">
          <div className="w-[21px] h-[21px] rounded-[3px] border border-white bg-[linear-gradient(135deg,#6a94f0,#2a5ad8)] flex items-end justify-center pb-[4px]"><div className="w-[7px] h-[3px] bg-white" /></div>
          <div className="w-[21px] h-[21px] rounded-[3px] border border-white bg-[linear-gradient(135deg,#6a94f0,#2a5ad8)] flex items-center justify-center">
            <svg width="13" height="13" viewBox="0 0 13 13"><path d="M4 3V1h8v7h-2" fill="none" stroke="#fff" strokeWidth="1.300" /><rect x="1.500" y="4" width="8" height="8" fill="none" stroke="#fff" strokeWidth="1.300" /><path d="M1 4.500h9" stroke="#fff" strokeWidth="2" /></svg>
          </div>
          <div className="w-[21px] h-[21px] rounded-[3px] border border-white bg-[linear-gradient(135deg,#f0a080,#d83a18)] flex items-center justify-center">
            <svg width="13" height="13" viewBox="0 0 13 13"><path d="M2 2l9 9M11 2l-9 9" stroke="#fff" strokeWidth="2.200" /></svg>
          </div>
        </div>
      </div>
      <div className="h-[22px] shrink-0 bg-[#ece9d8] flex items-center pl-[5px] gap-[12px] text-[10px] text-[#111] font-['Liberation_Mono',monospace] whitespace-pre">
        <span><u>F</u>ile</span><span><u>E</u>dit</span><span><u>T</u>ools</span><span><u>G</u>roup</span><span><u>V</u>iews</span><span><u>C</u>reate</span><span>M<u>o</u>difiers</span><span>C<u>h</u>aracter</span><span>reactor</span><span><u>A</u>nimation</span><span>Graph E<u>d</u>itors</span><span><u>R</u>endering</span><span>C<u>u</u>stomize</span><span><u>M</u>AXScript</span><span><u>H</u>elp</span>
      </div>
      <TopToolbar />
      <div className="flex h-[635px] shrink-0">
        <LeftToolbar />
        <div className="w-[746px] shrink-0 flex flex-col">
          <Viewport />
          <Timeline />
        </div>
        <RightPanel />
      </div>
      <StatusBar />
      <div className="flex-1 bg-[#3a78c8]" />
      <Watermark />
    </div>
  );
}
